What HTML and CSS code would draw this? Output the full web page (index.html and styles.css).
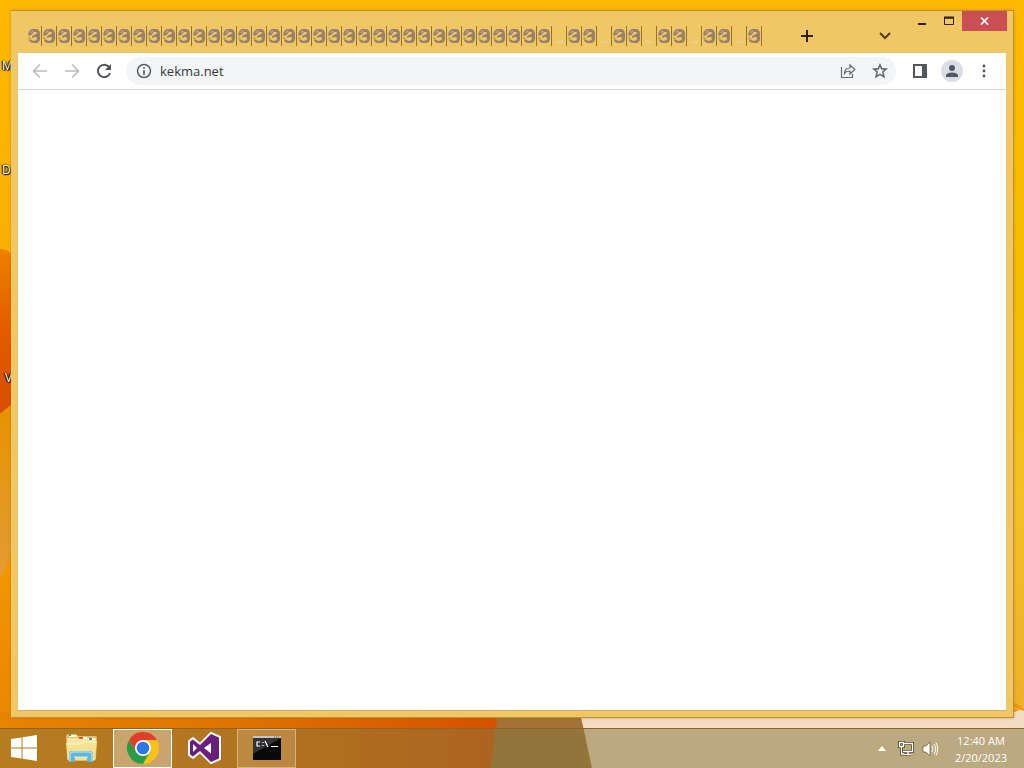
FILE: index.html
```html
<!DOCTYPE html>
<html lang="en">
<head>
<meta charset="utf-8">
<title>kekma.net</title>
<link rel="stylesheet" href="styles.css">
</head>
<body>
<svg class="defs" aria-hidden="true">
  <symbol id="globe" viewBox="0 0 12 14">
    <path d="M4 0H9Q12 1.500 12 5V10Q11.500 14 8 14H4.500Q1.500 13.500 .5 10.500L3 10.500L5.500 12L8.500 11L9 8.500L6.500 8L4.500 9L4 7L7 5.500L9 4.500L8.500 3L6 3L3.500 6L.5 7Q-.5 2 4 0Z" fill="#98816d"/>
    <path d="M2 3L5 1L6 2L3.500 4.500Z" fill="#b0a28c"/>
    <path d="M0 8L2 8L3 10L1 11Z" fill="#bda070"/>
  </symbol>
</svg>
<div class="desktop">
  <svg class="wallpaper" viewBox="0 0 1024 768" preserveAspectRatio="none" aria-hidden="true">
    <defs>
      <linearGradient id="sky" x1="0" y1="0" x2="0" y2="1"><stop offset="0" stop-color="#ffb900"/><stop offset=".45" stop-color="#f9ad00"/><stop offset="1" stop-color="#e98200"/></linearGradient>
      <linearGradient id="right" x1="0" y1="0" x2="0" y2="1"><stop offset="0" stop-color="#ffb900"/><stop offset=".42" stop-color="#f4bf00"/><stop offset=".7" stop-color="#f5c126"/><stop offset="1" stop-color="#eeb02c"/></linearGradient>
      <linearGradient id="red" x1="0" y1="0" x2="0" y2="1"><stop offset="0" stop-color="#ed8000"/><stop offset=".5" stop-color="#e45b00"/><stop offset="1" stop-color="#d94e00"/></linearGradient>
      <linearGradient id="tan" x1="0" y1="0" x2="0" y2="1"><stop offset="0" stop-color="#e79300"/><stop offset="1" stop-color="#e29c35"/></linearGradient>
      <linearGradient id="floor"><stop offset="0" stop-color="#e98300"/><stop offset=".45" stop-color="#df7500"/><stop offset="1" stop-color="#d65100"/></linearGradient>
    </defs>
    <rect width="1024" height="768" fill="url(#sky)"/>
    <rect x="700" width="324" height="710" fill="url(#right)"/>
    <path d="M0 249Q11 249 12 258V405L0 414Z" fill="url(#red)"/>
    <path d="M0 414L12 404V552L0 578Z" fill="url(#tan)"/>
    <rect y="712" width="500" height="56" fill="url(#floor)"/>
    <path d="M498 712H580L592 768H490Z" fill="#a27335"/>
    <path d="M580 712H1014L1024 708V768H592Z" fill="#f3dcc5"/>
    <path d="M1012 701L1024 709V711L1012 706Z" fill="#ee9700"/>
  </svg>
  <span class="shortcut shortcut-m">M</span>
  <span class="shortcut shortcut-d">D</span>
  <span class="shortcut shortcut-v">V</span>

  <main class="workspace">
    <section class="window">
      <header class="titlebar">
        <div class="tabs" id="tabs"></div>
        <button class="newtab" aria-label="New tab"><svg width="12" height="12"><path d="M6 0V12M0 6H12" stroke="#30200f" stroke-width="2"/></svg></button>
        <button class="search" aria-label="Search tabs"><svg width="12" height="8"><path d="M1 1L6 6L11 1" fill="none" stroke="#553b18" stroke-width="2"/></svg></button>
        <div class="controls">
          <button class="control" aria-label="Minimize"><svg width="12" height="12"><path d="M2 9H10" stroke="#30200f" stroke-width="2"/></svg></button>
          <button class="control" aria-label="Maximize"><svg width="12" height="10"><path d="M1.500 1V8.500H10.500V1M1 2H11" fill="none" stroke="#30200f"/><path d="M1 1.500H11" stroke="#30200f" stroke-width="2"/></svg></button>
          <button class="control close" aria-label="Close"><svg width="9" height="8"><path d="M1 .5L8 7.500M8 .5L1 7.500" stroke="#fff" stroke-width="1.700"/></svg></button>
        </div>
      </header>
      <nav class="toolbar">
        <button class="tool" aria-label="Back"><svg width="16" height="16"><path d="M15 8H2M8 1.500L1.500 8L8 14.500" fill="none" stroke="#bababa" stroke-width="1.500"/></svg></button>
        <button class="tool" aria-label="Forward"><svg width="16" height="16"><path d="M1 8H14M8 1.500L14.500 8L8 14.500" fill="none" stroke="#bababa" stroke-width="1.500"/></svg></button>
        <button class="tool" aria-label="Reload"><svg width="16" height="16"><path d="M13 4A6.200 6.200 0 1 0 14 10" fill="none" stroke="#505357" stroke-width="2"/><path d="M15 1V7H9Z" fill="#505357"/></svg></button>
        <div class="address">
          <svg width="16" height="16" aria-hidden="true"><circle cx="8" cy="8" r="6.500" fill="none" stroke="#5b5e62" stroke-width="1.500"/><path d="M8 7V12M8 4V5.700" stroke="#5b5e62" stroke-width="1.600"/></svg>
          <input class="url" type="text" value="kekma.net" aria-label="Address" spellcheck="false">
          <button class="tool" aria-label="Share"><svg width="16" height="16"><path d="M1.500 4V14.500H12.500V11M4.500 10.500Q4.500 5 10 5V2L14.800 6.500L10 11V8Q6 8 4.500 10.500Z" fill="none" stroke="#66696c" stroke-width="1.200"/></svg></button>
          <button class="tool" aria-label="Bookmark"><svg width="16" height="16"><path d="M8 1.800L9.800 6H14.200L10.800 9L12 13.800L8 11.300L4 13.800L5.200 9L1.800 6H6.200Z" fill="none" stroke="#5b5e62" stroke-width="1.400"/></svg></button>
        </div>
        <button class="tool" aria-label="Side panel"><svg width="14" height="14"><path d="M1 1H13V13H1Z" fill="none" stroke="#55585b" stroke-width="2"/><path d="M9 0H14V14H9Z" fill="#55585b"/></svg></button>
        <button class="tool profile" aria-label="Profile"><svg width="14" height="14"><circle cx="7" cy="4" r="3" fill="#505866"/><path d="M1 13V11Q2 8.500 7 8.500T13 11V13Z" fill="#505866"/></svg></button>
        <button class="tool" aria-label="Menu"><svg width="4" height="14"><g fill="#505357"><circle cx="2" cy="2" r="1.400"/><circle cx="2" cy="7" r="1.400"/><circle cx="2" cy="12" r="1.400"/></g></svg></button>
      </nav>
      <div class="page"></div>
    </section>
  </main>

  <footer class="taskbar">
    <button class="start" aria-label="Start"><svg width="28" height="26"><path d="M1 4L11.500 2.400V12.500H1ZM12.500 2.300L27 0V12.500H12.500ZM1 13.500H11.500V23.600L1 22ZM12.500 13.500H27V26L12.500 23.700Z" fill="#fff"/></svg></button>
    <button class="task" aria-label="File Explorer"><svg width="34" height="30">
      <path d="M2 3Q2 1 4 1H12L14 3H31Q33 3 33 5L32 25Q32 28 29 28H6Q3 28 3 25Z" fill="#e0bd68"/>
      <path d="M3 5H32V13H3Z" fill="#f3e7a6"/><path d="M5 3H13M16 5H23M24 6H31" stroke="#fffbe5" stroke-width="2"/><path d="M5 2H7" stroke="#31ad69" stroke-width="2"/><path d="M15 5H19" stroke="#cc593c" stroke-width="2"/><path d="M25 6H28" stroke="#4388c8" stroke-width="2"/>
      <path d="M2 10H17L19 8H33L31 27H4Z" fill="#f3e391"/><path d="M3 11H17L19 9H32" fill="none" stroke="#fff8c7"/>
      <path d="M5 29V21Q5 18 8 18H26Q29 18 29 21V29H23V24H11V29Z" fill="#62b5dc"/><path d="M6 28V21Q6 19 9 19H25Q28 19 28 21V28M10 24H24" fill="none" stroke="#c9f0fa"/>
    </svg></button>
    <button class="task active" aria-label="Chrome"><svg width="32" height="32" viewBox="0 0 32 32">
      <circle cx="16" cy="16" r="16" fill="#fbc116"/>
      <path d="M2.140 8A16 16 0 0 1 29.860 8H16L9.100 20Z" fill="#e33b2e"/>
      <path d="M2.140 8A16 16 0 0 0 16 32L22.900 20L9.100 20Z" fill="#2a9b48"/>
      <circle cx="16" cy="16" r="8" fill="#fff"/><circle cx="16" cy="16" r="6.300" fill="#2c77e8"/>
    </svg></button>
    <button class="task" aria-label="Visual Studio"><svg width="34" height="32"><path d="M23 1L32 5V27L23 31L12 20L5 26L1 23V9L5 6L12 12Z" fill="#fff" stroke="#fff" stroke-width="2" stroke-linejoin="round"/><path d="M23 2L31 5.500V26.500L23 30L12 19L5 24.500L2 22.500V9.500L5 7.500L12 13ZM23 11L16 16L23 21.500ZM5 12V20L9 16Z" fill="#68217a" fill-rule="evenodd"/></svg></button>
    <button class="task open" aria-label="Command Prompt"><svg width="28" height="24"><rect width="28" height="24" fill="#0a0a0a"/><path d="M0 2H28L0 18Z" fill="#333"/><path d="M0 1H28" stroke="#c4c4c4" stroke-width="2"/><path d="M21 1H27" stroke="#555" stroke-dasharray="1 1"/><path d="M7 6H4V10H7M10 6V7M10 9V10M12 5L15 11M18 10.500H25" fill="none" stroke="#fff" stroke-width="1.200"/></svg></button>
    <div class="tray">
      <button class="trayicon" aria-label="Show hidden icons"><svg width="8" height="5"><path d="M4 0L8 5H0Z" fill="#fff"/></svg></button>
      <button class="trayicon" aria-label="Network"><svg width="16" height="15"><g fill="none" stroke="#54431f" stroke-width="3"><path d="M6 2.500H14.500V10.500H5M10 10V13M6 13.500H13M1.500 1.500H5.500V5.500H1.500ZM3.500 6V13H6"/></g><g fill="none" stroke="#fff" stroke-width="1.300"><path d="M6 2.500H14.500V10.500H5M10 10V13M6 13.500H13M1.500 1.500H5.500V5.500H1.500ZM3.500 6V13H6"/></g></svg></button>
      <button class="trayicon" aria-label="Volume"><svg width="16" height="16"><path d="M1 5H4L8 1V15L4 11H1Z" fill="#fff" stroke="#65532c" stroke-width=".7"/><path d="M10 5Q12 8 10 11M12 3Q15.500 8 12 13M14 1.500Q17.500 8 14 14.500" fill="none" stroke="#fff"/></svg></button>
      <time class="clock" datetime="2023-02-20T00:40"><span>12:40 AM</span><span>2/20/2023</span></time>
    </div>
  </footer>
</div>
<script src="tabs.js"></script>
</body>
</html>
```
FILE: styles.css
```css
* { box-sizing: border-box; }
body { margin: 0; font-family: "Open Sans", "Noto Sans", sans-serif; }
button { padding: 0; border: 0; background: none; display: flex; align-items: center; justify-content: center; }
svg { display: block; flex: none; }
.defs { position: absolute; width: 0; height: 0; }
.desktop { position: relative; min-height: 100vh; display: flex; flex-direction: column; overflow: hidden; }
.wallpaper { position: absolute; inset: 0; width: 100%; height: 100%; }
.shortcut { position: absolute; color: #fff; font-size: 12px; line-height: 16px; text-shadow: 1px 1px 1px #000, -1px 0 1px #000, 0 0 2px #000; }
.shortcut-m { left: 2px; top: 58px; }
.shortcut-d { left: 2px; top: 162px; }
.shortcut-v { left: 5px; top: 370px; }

.workspace { position: relative; flex: 1; display: flex; padding: 10px 10px 10px 11px; }
.window { flex: 1; min-width: 0; display: flex; flex-direction: column; padding: 0 7px 6px; background: #efc865; border: 1px solid #bf8f3a; border-width: 1px 1px 1px 0; box-shadow: 0 0 3px #9c610066; }
.titlebar { height: 42px; display: flex; align-items: flex-start; }
.tabs { display: flex; padding: 15px 0 0 9px; }
.tab { width: 15px; height: 20px; border-right: 1px solid #977521; }
.tab svg { width: 12px; height: 14px; }
.tab.blank svg { visibility: hidden; }
.tab.blank { background: linear-gradient(#e7cd9a, #e7cd9a) 4px 15px / 7px 2px no-repeat; }
.newtab { width: 28px; height: 28px; margin: 11px 0 0 31px; }
.search { width: 28px; height: 28px; margin: 11px 0 0 auto; }
.controls { display: flex; padding-left: 9px; margin-right: -1px; }
.control { width: 27px; height: 20px; }
.control.close { width: 45px; background: #cb4f52; }

.toolbar { height: 37px; display: flex; align-items: center; padding: 0 6px; background: #fff; border-bottom: 1px solid #d3d3d5; }
.tool { width: 32px; height: 28px; flex: none; }
.address { flex: 1; min-width: 0; height: 28px; display: flex; align-items: center; margin: 0 8px 0 6px; padding-left: 10px; border-radius: 14px; background: #f3f5f6; }
.url { flex: 1; min-width: 0; height: 24px; margin-left: 8px; padding: 0; border: 0; outline: 0; background: none; color: #36393d; font: 13px/20px "Open Sans", "Noto Sans", sans-serif; }
.profile::before { content: ""; position: absolute; width: 22px; height: 22px; border-radius: 50%; background: #dadde3; }
.profile svg { position: relative; }
.page { flex: 1; background: #fff; border: 1px solid #cfae62; border-width: 0 0 1px; }

.taskbar { position: relative; height: 40px; display: flex; align-items: center; background: #84764080; border-top: 1px solid #8b6428; }
.start { width: 48px; height: 39px; padding-bottom: 2px; }
.task { width: 59px; height: 39px; margin-left: 3px; padding-bottom: 2px; border: 1px solid transparent; }
.task.active { border-color: #fff; background: #d8cbb18c; }
.task.open { border-color: #d7b47c; background: #d8b98a4d; }
.tray { margin-left: auto; display: flex; align-items: center; padding-right: 17px; }
.trayicon { width: 24px; height: 24px; }
.clock { display: flex; flex-direction: column; align-items: center; margin-left: 13px; color: #fff; font-size: 11px; line-height: 17px; }
```
FILE: tabs.js
```js
const blanks = new Set([35, 38, 41, 44, 47]);
const strip = document.getElementById("tabs");
for (let i = 0; i < 49; i++) {
  const tab = document.createElement("button");
  tab.className = blanks.has(i) ? "tab blank" : "tab";
  tab.setAttribute("aria-label", "Tab " + (i + 1));
  tab.innerHTML = '<svg viewBox="0 0 12 14"><use href="#globe"/></svg>';
  strip.append(tab);
}
```
